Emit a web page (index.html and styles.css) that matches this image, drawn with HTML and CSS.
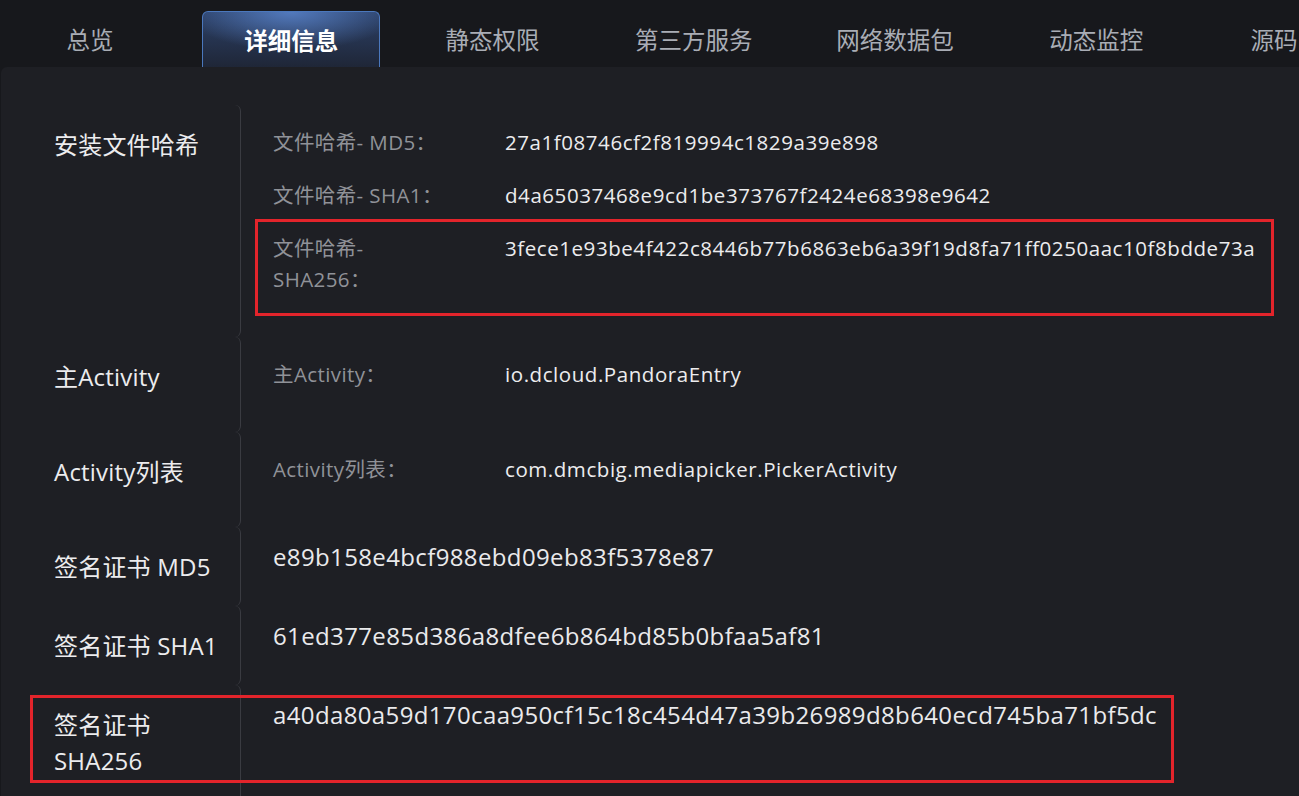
FILE: index.html
```html
<!DOCTYPE html>
<html lang="zh-CN">
<head>
<meta charset="utf-8">
<title>详细信息</title>
<link rel="stylesheet" href="styles.css">
</head>
<body>
<nav class="tabs">
  <div class="tab">总览</div>
  <div class="tab tab-active">详细信息</div>
  <div class="tab">静态权限</div>
  <div class="tab">第三方服务</div>
  <div class="tab">网络数据包</div>
  <div class="tab">动态监控</div>
  <div class="tab tab-clip">源码</div>
</nav>
<main class="panel">
  <section class="row">
    <div class="label">安装文件哈希</div>
    <div class="value value-kv">
      <div class="kv-row"><div class="kv-key">文件哈希- MD5：</div><div class="kv-val">27a1f08746cf2f819994c1829a39e898</div></div>
      <div class="kv-row"><div class="kv-key">文件哈希- SHA1：</div><div class="kv-val">d4a65037468e9cd1be373767f2424e68398e9642</div></div>
      <div class="kv-row"><div class="kv-key">文件哈希- SHA256：</div><div class="kv-val">3fece1e93be4f422c8446b77b6863eb6a39f19d8fa71ff0250aac10f8bdde73a</div></div>
    </div>
  </section>
  <section class="row">
    <div class="label">主Activity</div>
    <div class="value value-kv">
      <div class="kv-row"><div class="kv-key">主Activity：</div><div class="kv-val">io.dcloud.PandoraEntry</div></div>
    </div>
  </section>
  <section class="row">
    <div class="label">Activity列表</div>
    <div class="value value-kv">
      <div class="kv-row"><div class="kv-key">Activity列表：</div><div class="kv-val">com.dmcbig.mediapicker.PickerActivity</div></div>
    </div>
  </section>
  <section class="row">
    <div class="label">签名证书 MD5</div>
    <div class="value">e89b158e4bcf988ebd09eb83f5378e87</div>
  </section>
  <section class="row">
    <div class="label">签名证书 SHA1</div>
    <div class="value">61ed377e85d386a8dfee6b864bd85b0bfaa5af81</div>
  </section>
  <section class="row row-last">
    <div class="label">签名证书 SHA256</div>
    <div class="value">a40da80a59d170caa950cf15c18c454d47a39b26989d8b640ecd745ba71bf5dc</div>
  </section>
</main>
<div class="mark mark-file"></div>
<div class="mark mark-cert"></div>
</body>
</html>
```

FILE: styles.css
```css
html, body {
  margin: 0;
  padding: 0;
}

body {
  width: 1299px;
  height: 796px;
  overflow: hidden;
  position: relative;
  background: #17181c;
  font-family: "Open Sans", "Noto Sans CJK SC", sans-serif;
  color: #e8e8ea;
}

.tabs {
  display: flex;
  gap: 23.25px;
  padding: 11px 0 0 1px;
  height: 56px;
  white-space: nowrap;
  overflow: hidden;
}

.tab {
  flex: none;
  width: 178px;
  height: 56px;
  box-sizing: border-box;
  display: flex;
  align-items: center;
  justify-content: center;
  font-size: 23.5px;
  color: #a9adb5;
}

.tab-clip {
  justify-content: flex-start;
  padding-left: 42px;
}

.tab-active {
  color: #ffffff;
  font-weight: 700;
  border: 1px solid #4b78bd;
  border-bottom: none;
  border-radius: 6px 6px 0 0;
  background:
    radial-gradient(ellipse 60% 70% at 50% 0%, rgba(92, 136, 210, 0.8), rgba(92, 136, 210, 0) 100%),
    linear-gradient(#2c4168, #1f2637);
}

.panel {
  margin-left: 1px;
  min-height: 729px;
  box-sizing: border-box;
  padding-top: 38px;
  background: #1e1f24;
  border-radius: 6px 0 0 0;
}

.row {
  display: flex;
}

.label {
  flex: none;
  width: 240px;
  box-sizing: border-box;
  padding: 22px 20px 21px 53px;
  font-size: 24px;
  line-height: 36px;
  letter-spacing: 0.2px;
  color: #ececee;
  border-right: 1px solid #3a3b41;
  border-radius: 0 6px 6px 0;
}

.row-last .label {
  padding-bottom: 40px;
}

.value {
  flex: 1;
  padding: 12px 0 0 32px;
  font-size: 24px;
  line-height: 36px;
  letter-spacing: 0.37px;
  color: #eaeaec;
}

.value-kv {
  padding: 11px 0 31px 32px;
  letter-spacing: 0;
}

.kv-row {
  display: grid;
  grid-template-columns: 232px 1fr;
  padding: 11px 0;
  font-size: 20.5px;
  line-height: 31px;
}

.kv-key {
  padding-right: 52px;
  letter-spacing: 0.4px;
  color: #909298;
}

.kv-val {
  color: #ececee;
  letter-spacing: 0.56px;
  white-space: nowrap;
}

.mark {
  position: absolute;
  box-sizing: border-box;
  border: 3px solid #e3242b;
}

.mark-file {
  left: 255px;
  top: 219px;
  width: 1019px;
  height: 97px;
}

.mark-cert {
  left: 30px;
  top: 695px;
  width: 1144px;
  height: 88px;
}
```
